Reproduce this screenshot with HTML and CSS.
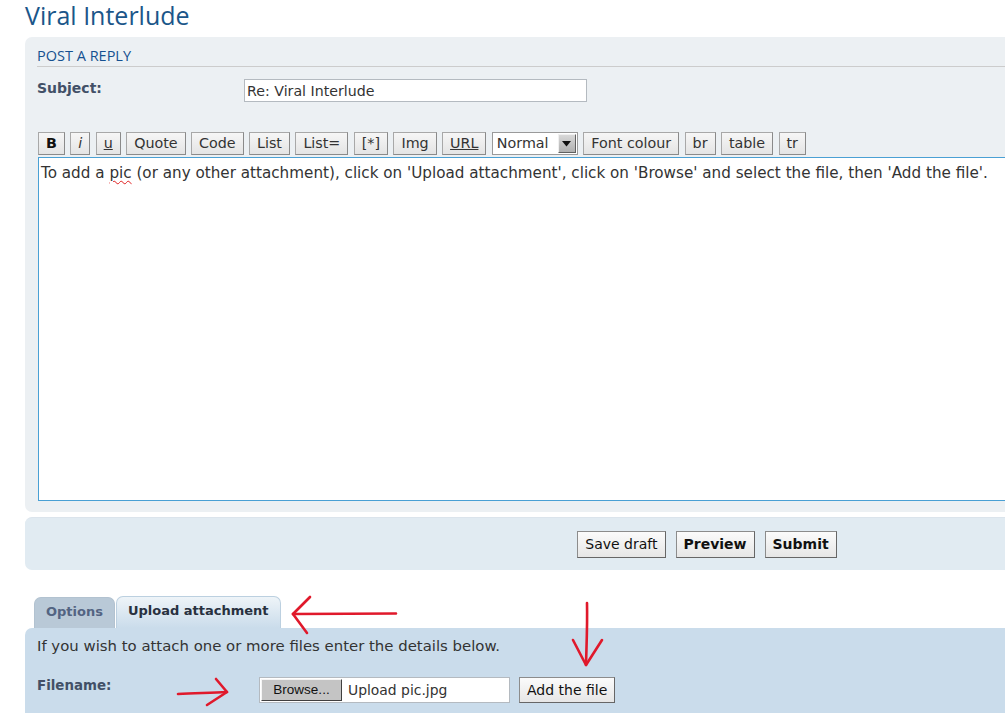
FILE: index.html
```html
<!DOCTYPE html>
<html>
<head>
<meta charset="utf-8">
<title>Viral Interlude</title>
<link rel="stylesheet" href="styles.css">
</head>
<body>
<div class="wrap">
  <h1 class="title">Viral Interlude</h1>

  <div class="panel panel-post">
    <h3 class="panel-head">POST A REPLY</h3>
    <div class="field-row">
      <label class="label">Subject:</label>
      <div class="input subject">Re: Viral Interlude</div>
    </div>
    <div class="toolbar">
      <span class="tbtn b-bold">B</span>
      <span class="tbtn b-ital">i</span>
      <span class="tbtn b-und">u</span>
      <span class="tbtn">Quote</span>
      <span class="tbtn">Code</span>
      <span class="tbtn">List</span>
      <span class="tbtn">List=</span>
      <span class="tbtn">[*]</span>
      <span class="tbtn">Img</span>
      <span class="tbtn b-und">URL</span>
      <span class="select"><span class="select-text">Normal</span><span class="select-arrow"><svg width="9" height="6" viewBox="0 0 9 6"><path d="M0 0h9L4.5 5.5z" fill="#111"/></svg></span></span>
      <span class="tbtn">Font colour</span>
      <span class="tbtn">br</span>
      <span class="tbtn">table</span>
      <span class="tbtn">tr</span>
    </div>
    <div class="editor">To add a <span class="spell">pic</span> (or any other attachment), click on 'Upload attachment', click on 'Browse' and select the file, then 'Add the file'.</div>
  </div>

  <div class="panel panel-submit">
    <span class="btn">Save draft</span>
    <span class="btn btn-bold">Preview</span>
    <span class="btn btn-bold">Submit</span>
  </div>

  <div class="tabs">
    <span class="tab">Options</span>
    <span class="tab tab-active">Upload attachment</span>
  </div>
  <div class="panel panel-attach">
    <p class="attach-note">If you wish to attach one or more files enter the details below.</p>
    <div class="file-row">
      <label class="label file-label">Filename:</label>
      <div class="file-input"><span class="browse">Browse...</span><span class="file-name">Upload pic.jpg</span></div>
      <span class="btn add-btn">Add the file</span>
    </div>
  </div>
</div>

<svg class="arrows" width="1005" height="713" viewBox="0 0 1005 713">
  <g fill="none" stroke="#e0192b" stroke-width="2.6" stroke-linecap="round" stroke-linejoin="round">
    <path d="M293 614 C330 613.5 360 614 396 613.5"/>
    <path d="M293 614 L310 597"/>
    <path d="M293 614 L307 633"/>
    <path d="M587 603 C587.5 625 586.5 645 586 665"/>
    <path d="M573 640 L586 665 L602 640"/>
    <path d="M178 694 C195 693 210 693 227 692"/>
    <path d="M216 679 L227 692 L207 705"/>
  </g>
</svg>
</body>
</html>
```
FILE: styles.css
```css
html, body {
  margin: 0;
  padding: 0;
  background: #ffffff;
  overflow: hidden;
}
body {
  width: 1005px;
  height: 713px;
  position: relative;
  font-family: "DejaVu Sans", Verdana, sans-serif;
  font-size: 14px;
  color: #333333;
}
.wrap {
  width: 1364px;
  padding-left: 25px;
}
.title {
  margin: 0;
  height: 37px;
  font-family: "Open Sans", "DejaVu Sans", sans-serif;
  font-weight: normal;
  font-size: 25px;
  line-height: 31px;
  color: #1b5689;
}
.panel {
  border-radius: 7px 0 0 7px;
}
.panel-post {
  background: #ecf0f3;
  padding: 0 0 11px 12px;
}
.panel-head {
  margin: 0;
  padding: 10px 0 2px 0;
  font-family: "Open Sans", "DejaVu Sans", sans-serif;
  font-weight: normal;
  font-size: 14.5px;
  line-height: 17px;
  color: #155090;
  border-bottom: 1px solid #cccccc;
}
.field-row {
  display: flex;
  align-items: flex-start;
  margin-top: 12px;
}
.label {
  width: 207px;
  font-weight: bold;
  color: #425067;
  font-size: 14px;
  line-height: 17px;
  padding-top: 1px;
}
.input {
  box-sizing: border-box;
  width: 343px;
  height: 23px;
  background: #ffffff;
  border: 1px solid #b4bac0;
  padding: 2px 2px;
  font-size: 14.2px;
  line-height: 18px;
  color: #333;
}
.toolbar {
  display: flex;
  gap: 5.4px;
  margin: 30px 0 0 1px;
}
.tbtn {
  box-sizing: border-box;
  height: 23px;
  padding: 0 7px;
  border: 1px solid #a8a8a8;
  border-right-color: #8a8a8a;
  border-bottom-color: #8a8a8a;
  background: linear-gradient(#f6f6f6, #e4e4e4);
  font-size: 14.3px;
  line-height: 21px;
  color: #333333;
}
.b-bold { font-weight: bold; padding: 0 7px; color: #111; }
.b-ital { font-style: italic; }
.b-und { text-decoration: underline; }
.select {
  box-sizing: border-box;
  display: flex;
  width: 86px;
  height: 23px;
  border: 1px solid #9a9a9a;
  background: #ffffff;
  padding: 1px;
}
.select-text {
  flex: 1;
  padding-left: 3px;
  line-height: 19px;
  font-size: 14.3px;
}
.select-arrow {
  width: 18px;
  display: flex;
  align-items: center;
  justify-content: center;
  background: linear-gradient(#d8d8d8, #b0b0b0);
  border: 1px solid #f0f0f0;
  border-right-color: #606060;
  border-bottom-color: #606060;
  box-sizing: border-box;
}
.editor {
  box-sizing: border-box;
  margin: 2px 0 0 1px;
  height: 344px;
  background: #ffffff;
  border: 1px solid #4aa0d4;
  padding: 6px 2px;
  font-size: 15.2px;
  line-height: 18px;
  color: #333333;
  white-space: nowrap;
  overflow: hidden;
}
.spell {
  text-decoration: underline wavy #e02020;
  text-decoration-thickness: 1px;
  text-underline-offset: 2px;
}
.panel-submit {
  margin-top: 5px;
  background: #e1ebf2;
  height: 53px;
  box-sizing: border-box;
  padding-top: 13px;
  display: flex;
  justify-content: center;
  gap: 10px;
  border-top: 1px solid #dbe4ec;
}
.btn {
  box-sizing: border-box;
  height: 27px;
  padding: 0 7px;
  border: 1px solid #666666;
  border-top-color: #8c8c8c;
  border-left-color: #8c8c8c;
  background: linear-gradient(#fbfbfb, #e6e6e6);
  font-size: 14px;
  line-height: 25px;
  color: #111;
}
.btn-bold { font-weight: bold; }
.tabs {
  display: flex;
  align-items: flex-end;
  gap: 1px;
  margin: 26px 0 0 9px;
  height: 32px;
}
.tab {
  box-sizing: border-box;
  height: 31px;
  padding: 0 11px;
  border-radius: 7px 7px 0 0;
  background: #b9c9d7;
  border: 1px solid #b2c2d0;
  border-bottom: none;
  font-weight: bold;
  font-size: 13px;
  line-height: 28px;
  color: #536482;
}
.tab-active {
  height: 32px;
  background: linear-gradient(#eef4f8, #cadceb);
  border-color: #bcd0e0;
  color: #28313f;
  padding: 0 11px;
}
.panel-attach {
  background: #cadceb;
  padding: 9px 12px 20px 12px;
  border-radius: 7px 0 0 0;
}
.attach-note {
  margin: 0;
  font-size: 14.9px;
  line-height: 18px;
  color: #333333;
}
.file-row {
  display: flex;
  align-items: flex-start;
  margin-top: 22px;
}
.file-label {
  width: 222px;
  font-size: 13.4px;
  padding-top: 0;
}
.file-input {
  box-sizing: border-box;
  width: 251px;
  height: 26px;
  background: #ffffff;
  border: 1px solid #b4bac0;
  padding: 1px;
  display: flex;
}
.browse {
  box-sizing: border-box;
  width: 81px;
  height: 22px;
  background: #c4c4c4;
  border: 1px solid #f4f4f4;
  border-right-color: #404040;
  border-bottom-color: #404040;
  font-family: "Liberation Sans", Arial, sans-serif;
  font-size: 13.5px;
  line-height: 20px;
  text-align: center;
  color: #111;
}
.file-name {
  padding-left: 6px;
  line-height: 22px;
  font-size: 13.9px;
  color: #333;
}
.add-btn {
  margin-left: 9px;
  height: 26px;
  line-height: 24px;
}
.arrows {
  position: absolute;
  left: 0;
  top: 0;
  pointer-events: none;
}
```
